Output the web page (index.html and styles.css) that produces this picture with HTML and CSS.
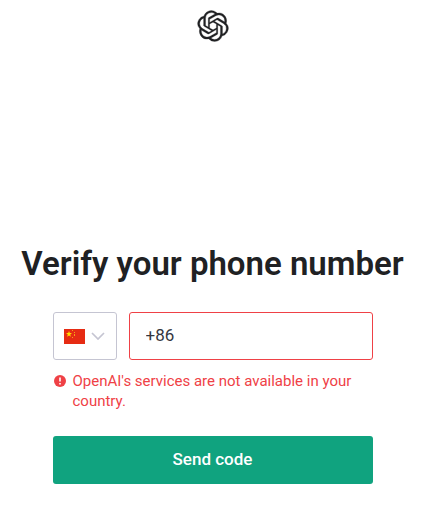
FILE: index.html
```
<!DOCTYPE html>
<html lang="en">

<head>
    <meta charset="UTF-8">
    <meta name="viewport" content="width=device-width, initial-scale=1.0">
    <title>Verify your phone number - OpenAI</title>
    <link rel="stylesheet" href="styles.css">
</head>

<body>

    <header class="page-header">
        <svg class="logo" viewBox="-0.4 -0.4 24.8 24.8" role="img" aria-label="OpenAI">
            <path fill="currentColor" stroke="currentColor" stroke-width="0.2" d="M22.2819 9.8211a5.9847 5.9847 0 0 0-.5157-4.9108 6.0462 6.0462 0 0 0-6.5098-2.9A6.0651 6.0651 0 0 0 4.9807 4.1818a5.9847 5.9847 0 0 0-3.9977 2.9 6.0462 6.0462 0 0 0 .7427 7.0966 5.98 5.98 0 0 0 .511 4.9107 6.051 6.051 0 0 0 6.5146 2.9001A5.9847 5.9847 0 0 0 13.2599 24a6.0557 6.0557 0 0 0 5.7718-4.2058 5.9894 5.9894 0 0 0 3.9977-2.9001 6.0557 6.0557 0 0 0-.7475-7.073zm-9.022 12.6081a4.4755 4.4755 0 0 1-2.8764-1.0408l.1419-.0804 4.7783-2.7582a.7948.7948 0 0 0 .3927-.6813v-6.7369l2.02 1.1686a.071.071 0 0 1 .038.052v5.5826a4.504 4.504 0 0 1-4.4945 4.4944zm-9.6607-4.1254a4.4708 4.4708 0 0 1-.5346-3.0137l.142.0852 4.783 2.7582a.7712.7712 0 0 0 .7806 0l5.8428-3.3685v2.3324a.0804.0804 0 0 1-.0332.0615L9.74 19.9502a4.4992 4.4992 0 0 1-6.1408-1.6464zM2.3408 7.8956a4.485 4.485 0 0 1 2.3655-1.9728V11.6a.7664.7664 0 0 0 .3879.6765l5.8144 3.3543-2.0201 1.1685a.0757.0757 0 0 1-.071 0l-4.8303-2.7865A4.504 4.504 0 0 1 2.3408 7.872zm16.5963 3.8558L13.1038 8.364 15.1192 7.2a.0757.0757 0 0 1 .071 0l4.8303 2.7913a4.4944 4.4944 0 0 1-.6765 8.1042v-5.6772a.79.79 0 0 0-.407-.667zm2.0107-3.0231l-.142-.0852-4.7735-2.7818a.7759.7759 0 0 0-.7854 0L9.409 9.2297V6.8974a.0662.0662 0 0 1 .0284-.0615l4.8303-2.7866a4.4992 4.4992 0 0 1 6.6802 4.66zM8.3065 12.863l-2.02-1.1638a.0804.0804 0 0 1-.038-.0567V6.0742a4.4992 4.4992 0 0 1 7.3757-3.4537l-.142.0805L8.704 5.459a.7948.7948 0 0 0-.3927.6813zm1.0976-2.3654l2.602-1.4998 2.6069 1.4998v2.9994l-2.5974 1.4997-2.6067-1.4997Z"/>
        </svg>
    </header>

    <main class="container">
        <h1>Verify your phone number</h1>
        <form class="phone-form">
            <div class="phone-row">
                <div class="country">
                    <svg class="flag" viewBox="0 0 21 15" aria-hidden="true">
                        <rect width="21" height="15" fill="#e62b13"/>
                        <path fill="#ffde00" d="M5 2l.8 2.1H8L6.200 5.500l.7 2.200L5 6.400 3.100 7.700l.7-2.200L2 4.100h2.200z"/>
                        <g fill="#f5a417">
                            <rect x="8" y="1" width="1" height="1"/>
                            <rect x="10" y="3" width="1" height="1"/>
                            <rect x="10" y="5" width="1" height="2"/>
                            <rect x="8" y="8" width="1" height="1"/>
                        </g>
                    </svg>
                    <svg class="chevron" viewBox="0 0 14 8" aria-hidden="true">
                        <path d="M1 1l6 6 6-6" fill="none" stroke="currentColor" stroke-width="1.7"/>
                    </svg>
                    <select id="country" aria-label="Country">
                        <option value="CN">China</option>
                    </select>
                </div>
                <input type="tel" class="phone-input" id="phone" value="+86" aria-label="Phone number" aria-invalid="true" aria-describedby="phoneError">
            </div>
            <div class="error" id="phoneError">
                <svg class="error-icon" viewBox="0 0 12 12" aria-hidden="true">
                    <circle cx="6" cy="6" r="6" fill="currentColor"/>
                    <path d="M6 2.500v4M6 8v1.500" stroke="#fff" stroke-width="1.600"/>
                </svg>
                <span>OpenAI's services are not available in your country.</span>
            </div>
            <button type="submit" class="btn">Send code</button>
        </form>
    </main>

</body>

</html>
```

FILE: styles.css
```
* {
    box-sizing: border-box;
}

body {
    margin: 0;
    background: #fff;
    color: #202123;
    font-family: Roboto, "Liberation Sans", sans-serif;
}

.page-header {
    display: flex;
    justify-content: center;
    padding: 10px;
}

.logo {
    width: 32px;
    height: 32px;
}

.container {
    padding: 192px 16px 24px;
}

h1 {
    margin: 0 0 28px;
    font-size: 33px;
    line-height: 40px;
    font-weight: 600;
    text-align: center;
    white-space: nowrap;
}

.phone-form {
    max-width: 320px;
    margin: 0 auto;
}

.phone-row {
    display: flex;
    gap: 12px;
}

.country {
    position: relative;
    display: flex;
    align-items: center;
    justify-content: center;
    gap: 6px;
    width: 64px;
    height: 48px;
    border: 1px solid #c5c5d2;
    border-radius: 3px;
}

/* the real select lies over the flag and catches the clicks */
.country select {
    position: absolute;
    inset: 0;
    width: 100%;
    opacity: 0;
    cursor: pointer;
}

.flag {
    width: 21px;
    height: 15px;
}

.chevron {
    width: 14px;
    height: 8px;
    color: #c5c5d2;
}

.phone-input {
    flex: 1;
    min-width: 0;
    height: 48px;
    padding: 0 16px 2px;
    border: 1px solid #ef4146;
    border-radius: 3px;
    background: #fff;
    color: #353740;
    font-family: inherit;
    font-size: 17px;
}

.error {
    display: flex;
    gap: 7px;
    margin-top: 11px;
    color: #ef4146;
    font-size: 15px;
    line-height: 20px;
}

.error-icon {
    flex: none;
    width: 12px;
    height: 12px;
    margin: 4px 0 0 1px;
}

.btn {
    width: 100%;
    height: 48px;
    margin-top: 25px;
    padding: 0 0 2px;
    border: none;
    border-radius: 3px;
    background: #10a37f;
    color: #fff;
    font-family: inherit;
    font-size: 17px;
    font-weight: 500;
    cursor: pointer;
}

.btn:hover {
    background: #1a7f64;
}
```
